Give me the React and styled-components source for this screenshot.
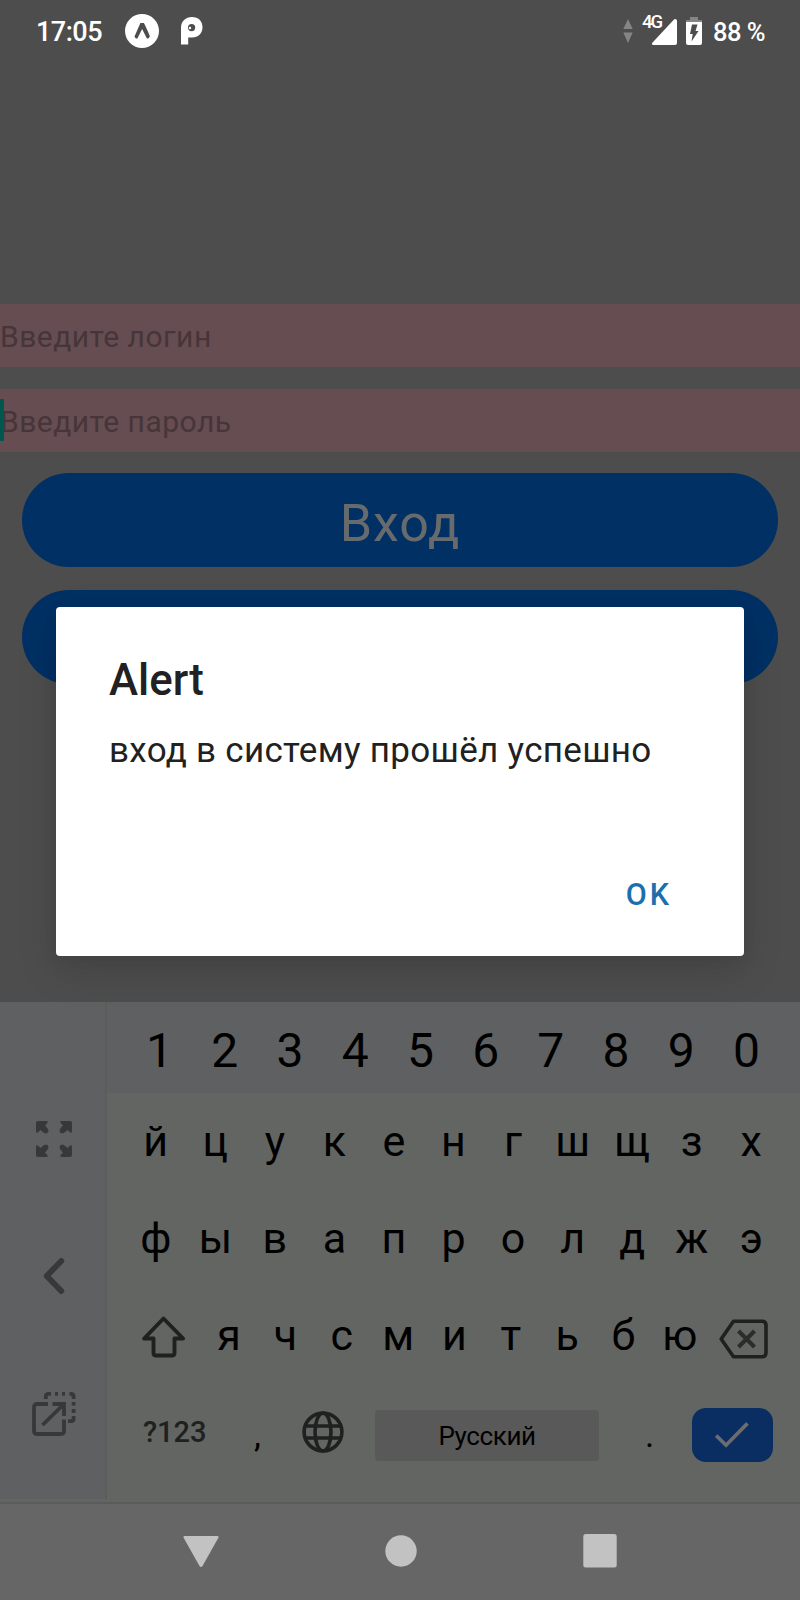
import React from "react";
import styled, { createGlobalStyle } from "styled-components";

const GlobalStyle = createGlobalStyle`
  * { box-sizing: border-box; }
  body { margin: 0; background: #4d4d4d; font-family: Roboto, "Noto Sans", sans-serif; }
  svg { display: block; flex: none; }
`;

const Screen = styled.div`
  position: relative;
  display: flex;
  flex-direction: column;
  width: 800px;
  height: 1600px;
  overflow: hidden;
  background: #4d4d4d;
`;

const StatusBar = styled.header`
  display: flex;
  justify-content: space-between;
  height: 304px;
  padding: 0 35px 0 36px;
  color: #fff;
`;

const StatusGroup = styled.div`
  display: flex;
  align-items: center;
  height: 61px;
`;

const Clock = styled.span`
  width: 89px;
  font-size: 27px;
  font-weight: 500;
  line-height: 62px;
  letter-spacing: -0.5px;
  padding-top: 2px;
`;

const Percent = styled.span`
  margin-left: 11px;
  font-size: 25.5px;
  font-weight: 500;
  line-height: 62px;
  letter-spacing: -0.5px;
  white-space: nowrap;
  padding-top: 2px;
`;

const Signal = styled.div`
  position: relative;
  margin: 2px 9px 0 9px;
`;

const NetworkLabel = styled.span`
  position: absolute;
  left: 0;
  top: -6px;
  font-size: 18.5px;
  line-height: 18px;
  font-weight: 500;
  letter-spacing: -1.8px;
`;

const Form = styled.main`
  display: flex;
  flex-direction: column;
  gap: 21.5px;
  height: 698px;
`;

const Field = styled.div`
  position: relative;
  flex: none;
  height: 63px;
  background: #664d51;
  color: #463539;
  font-size: 30px;
  letter-spacing: 0.48px;
  line-height: 65px;
`;

const Caret = styled.i`
  position: absolute;
  left: 0;
  top: 10px;
  width: 4px;
  height: 42px;
  background: #00574d;
`;

const Submit = styled.button`
  flex: none;
  height: 94px;
  margin: 0 22px 1px;
  padding: 7px 0 0;
  border: 0;
  border-radius: 47px;
  background: #003064;
  color: #686b6d;
  font: 400 52px/87px Roboto, sans-serif;
  letter-spacing: 0.9px;
`;

const Dialog = styled.section`
  position: absolute;
  left: 56px;
  top: 607px;
  z-index: 2;
  display: flex;
  flex-direction: column;
  width: 688px;
  height: 349px;
  padding: 47px 53px 0;
  border-radius: 4px;
  background: #fff;
  box-shadow: 0 14px 40px rgba(0, 0, 0, 0.14), 0 2px 16px rgba(0, 0, 0, 0.05);
  color: #212121;
`;

const DialogTitle = styled.h2`
  margin: 0;
  font-size: 43.8px;
  line-height: 52px;
  font-weight: 500;
`;

const DialogText = styled.p`
  margin: 23px 0 0;
  font-size: 35px;
  line-height: 44px;
  letter-spacing: 0.3px;
  white-space: nowrap;
`;

const DialogAction = styled.button`
  align-self: flex-end;
  margin-top: 100px;
  padding: 0;
  margin-right: 19px;
  border: 0;
  background: none;
  color: #1b6fae;
  font: 500 30.5px/44px Roboto, sans-serif;
  letter-spacing: 3px;
`;

const Keyboard = styled.section`
  display: flex;
  flex: none;
  height: 502px;
  background: #636563;
  border-bottom: 2px solid #5a5b5b;
`;

const SidePanel = styled.aside`
  display: flex;
  flex-direction: column;
  align-items: center;
  width: 107px;
  height: 497px;
  padding: 119px 0 0 2px;
  background: #5f6062;
  border-right: 2px solid #5b5d5d;
`;

const SideIcon = styled.div`
  margin-bottom: ${(p) => p.$gap || 0}px;
`;

const Keys = styled.div`
  flex: 1;
`;

const NumberRow = styled.div`
  display: flex;
  height: 91px;
  padding: 6px 21px 0 20px;
  background: #5f6062;
  font-size: 48px;
`;

const LetterRow = styled.div`
  display: flex;
  align-items: center;
  height: 97px;
  padding: 0 19px 0 19px;
  font-size: 43px;
`;

const Key = styled.div`
  flex: 1 1 0;
  min-width: 0;
  display: flex;
  justify-content: center;
  align-items: center;
  color: #000;
  line-height: 85px;
`;

const EdgeKey = styled.div`
  display: flex;
  align-items: center;
  justify-content: ${(p) => p.$align};
  width: ${(p) => p.$width}px;
  padding: ${(p) => p.$pad};
`;

const BottomRow = styled.div`
  display: flex;
  align-items: center;
  height: 102px;
  padding-left: 36px;
  color: #000;
`;

const SymbolsKey = styled.span`
  width: 111px;
  color: #1f2120;
  font-size: 29px;
  font-weight: 500;
  letter-spacing: 0;
  line-height: 40px;
  padding-bottom: 6px;
`;

const PunctuationKey = styled.span`
  width: ${(p) => p.$width}px;
  font-size: 35px;
  line-height: 40px;
  padding-top: 1px;
`;

const GlobeKey = styled.div`
  padding-bottom: 7px;
`;

const SpaceKey = styled.div`
  width: 224px;
  height: 51px;
  margin: 0 46px 0 31px;
  border-radius: 4px;
  background: #595959;
  font-size: 26px;
  line-height: 53px;
  letter-spacing: -0.4px;
  text-align: center;
`;

const EnterKey = styled.div`
  display: flex;
  align-items: center;
  justify-content: center;
  width: 81px;
  height: 54px;
  border-radius: 14px;
  background: #0a2e61;
`;

const NavBar = styled.nav`
  display: flex;
  flex: none;
  justify-content: center;
  align-items: center;
  gap: 166px;
  height: 96px;
  padding: 0 1px 2px 0;
  background: #666;
`;

const ExpoIcon = () => (
  <svg width="34" height="34" viewBox="0 0 34 34">
    <circle cx="17" cy="17" r="17" fill="#fff" />
    <path d="M15.400 9h3.500c1 1.500 5 10.500 6 13.300-.8 1.600-2 2.700-3 2.200L17.100 15l-4.700 9.500c-1 .5-2.500-.7-2.900-2.100z" fill="#4d4d4d" />
  </svg>
);

const ParkingIcon = () => (
  <svg width="22" height="28" viewBox="0 0 22 28">
    <path fill="#fff" d="M0 27.500V11C0 4 4.700 0 11 0s10.500 4.100 10.500 10.200c0 6.300-4.500 10.300-10.300 10.300H7.200v7z" />
    <circle cx="10.600" cy="10.600" r="3.600" fill="#4d4d4d" />
    <circle cx="9" cy="11" r="1.200" fill="#fff" />
  </svg>
);

const ParkingSlot = styled.div`
  margin-left: 21.500px;
`;

const DataArrows = () => (
  <svg width="10" height="24" viewBox="0 0 10 24" fill="#858585">
    <path d="M5 0l4.700 10H.3zM5 24L.3 13.500h9.400z" />
  </svg>
);

const SignalIcon = () => (
  <svg width="35" height="26" viewBox="0 0 35 26">
    <path d="M33 0q2 0 2 2v22q0 2-2 2H11q-2-1-.4-2.600L32 .5z" fill="#fff" />
  </svg>
);

const BatteryIcon = () => (
  <svg width="16" height="28" viewBox="0 0 16 28">
    <path d="M4 3V0h8v3h4v4H0V3z" fill="#858585" />
    <path d="M0 5h16v21q0 2-2 2H2q-2 0-2-2z" fill="#fff" />
    <path d="M6 7.500h5.500L9.500 14h3L5.500 24.500l1.200-7.500H4z" fill="#4d4d4d" />
  </svg>
);

const ExpandIcon = () => (
  <svg width="36" height="36" viewBox="0 0 36 36" fill="#37383a">
    {[0, 90, 180, 270].map((a) => (
      <path key={a} transform={`rotate(${a} 18 18)`} d="M2 0h9.500v2L9 4.300l3.300 4.200v2.500l-1.300 1.300H8.500L4.300 9 2 11.500H0V2q0-2 2-2z" />
    ))}
  </svg>
);

const BackIcon = () => (
  <svg width="22" height="36" viewBox="0 0 22 36" fill="none" stroke="#37383a" strokeWidth="5.800" strokeLinecap="round" strokeLinejoin="round">
    <path d="M18.300 3L3.700 18l14.600 15" />
  </svg>
);

const FloatIcon = () => (
  <svg width="44" height="44" viewBox="0 0 44 44" fill="none" stroke="#37383a" strokeWidth="3.800">
    <path d="M16 12H5q-3 0-3 3v24q0 3 3 3h24q3 0 3-3V27.500" />
    <path d="M20.500 12H32v12M31 13L10.500 33" />
    <path d="M13.800 7V4.500q0-2.600 2.600-2.600H19M23 1.900h3M30 1.900h3M37.500 1.900H39q2.600 0 2.600 2.600V7M41.600 10v3.500M41.600 17v4M41.600 24v2.500q0 2.600-2.600 2.600h-3" />
  </svg>
);

const ShiftIcon = () => (
  <svg width="43" height="42" viewBox="0 0 43 42" fill="none" stroke="#1f2120" strokeWidth="3.900" strokeLinejoin="round">
    <path d="M21.500 2.500L2.200 22.500h9.300V37q0 2.500 2.500 2.500h16q2.500 0 2.500-2.500V22.500h8.600z" />
  </svg>
);

const DeleteIcon = () => (
  <svg width="49" height="40" viewBox="0 0 49 40" fill="none" stroke="#1f2120" strokeWidth="3.600" strokeLinejoin="round">
    <path d="M14.500 2.200H43q4 0 4 4v27.600q0 4-4 4H14.500L2.200 20z" />
    <path d="M19.500 12L35.500 28M35.500 12L19.500 28" stroke="#2b2d2b" strokeWidth="4" />
  </svg>
);

const GlobeIcon = () => (
  <svg width="42" height="42" viewBox="0 0 42 42" fill="none" stroke="#1f2120" strokeWidth="3.600">
    <circle cx="21" cy="21" r="18.900" />
    <ellipse cx="21" cy="21" rx="8" ry="18.900" />
    <path d="M3.500 15h35M3.500 27h35" />
  </svg>
);

const CheckIcon = () => (
  <svg width="34" height="26" viewBox="0 0 34 26" fill="none" stroke="#696c70" strokeWidth="3.700">
    <path d="M1.200 13.600L11 23.200 32.500 1.400" />
  </svg>
);

const NavBack = () => (
  <svg width="36" height="34" viewBox="0 0 36 34" fill="#c2c2c2">
    <path d="M1.500 2h33q1.500 0 1 1.500L19.500 32q-1.500 2-3 0L.5 3.500Q0 2 1.500 2z" />
  </svg>
);

const NavHome = () => (
  <svg width="32" height="32" viewBox="0 0 32 32"><circle cx="16" cy="16" r="15.700" fill="#c2c2c2" /></svg>
);

const NavRecents = () => (
  <svg width="34" height="34" viewBox="0 0 34 34"><rect x="0.300" y="0" width="33.400" height="33.500" rx="2.500" fill="#c2c2c2" /></svg>
);

const letters = (s) => [...s].map((c) => <Key key={c}>{c}</Key>);

export default function App() {
  return (
    <Screen>
      <GlobalStyle />
      <StatusBar>
        <StatusGroup>
          <Clock>17:05</Clock>
          <ExpoIcon />
          <ParkingSlot><ParkingIcon /></ParkingSlot>
        </StatusGroup>
        <StatusGroup>
          <DataArrows />
          <Signal>
            <SignalIcon />
            <NetworkLabel>4G</NetworkLabel>
          </Signal>
          <BatteryIcon />
          <Percent>88 %</Percent>
        </StatusGroup>
      </StatusBar>
      <Form>
        <Field>Введите логин</Field>
        <Field><Caret />Введите пароль</Field>
        <Submit>Вход</Submit>
        <Submit />
      </Form>
      <Keyboard>
        <SidePanel>
          <SideIcon $gap={101}><ExpandIcon /></SideIcon>
          <SideIcon $gap={98}><BackIcon /></SideIcon>
          <SideIcon><FloatIcon /></SideIcon>
        </SidePanel>
        <Keys>
          <NumberRow>{letters("1234567890")}</NumberRow>
          <LetterRow>{letters("йцукенгшщзх")}</LetterRow>
          <LetterRow>{letters("фывапролджэ")}</LetterRow>
          <LetterRow>
            <EdgeKey $width={75} $align="flex-start" $pad="2px 0 0 16px"><ShiftIcon /></EdgeKey>
            {letters("ячсмитьбю")}
            <EdgeKey $width={73} $align="flex-end" $pad="6px 13px 0 0"><DeleteIcon /></EdgeKey>
          </LetterRow>
          <BottomRow>
            <SymbolsKey>?123</SymbolsKey>
            <PunctuationKey $width={48}>,</PunctuationKey>
            <GlobeKey><GlobeIcon /></GlobeKey>
            <SpaceKey>Русский</SpaceKey>
            <PunctuationKey $width={46.5}>.</PunctuationKey>
            <EnterKey><CheckIcon /></EnterKey>
          </BottomRow>
        </Keys>
      </Keyboard>
      <NavBar>
        <NavBack />
        <NavHome />
        <NavRecents />
      </NavBar>
      <Dialog role="alertdialog">
        <DialogTitle>Alert</DialogTitle>
        <DialogText>вход в систему прошёл успешно</DialogText>
        <DialogAction>OK</DialogAction>
      </Dialog>
    </Screen>
  );
}
